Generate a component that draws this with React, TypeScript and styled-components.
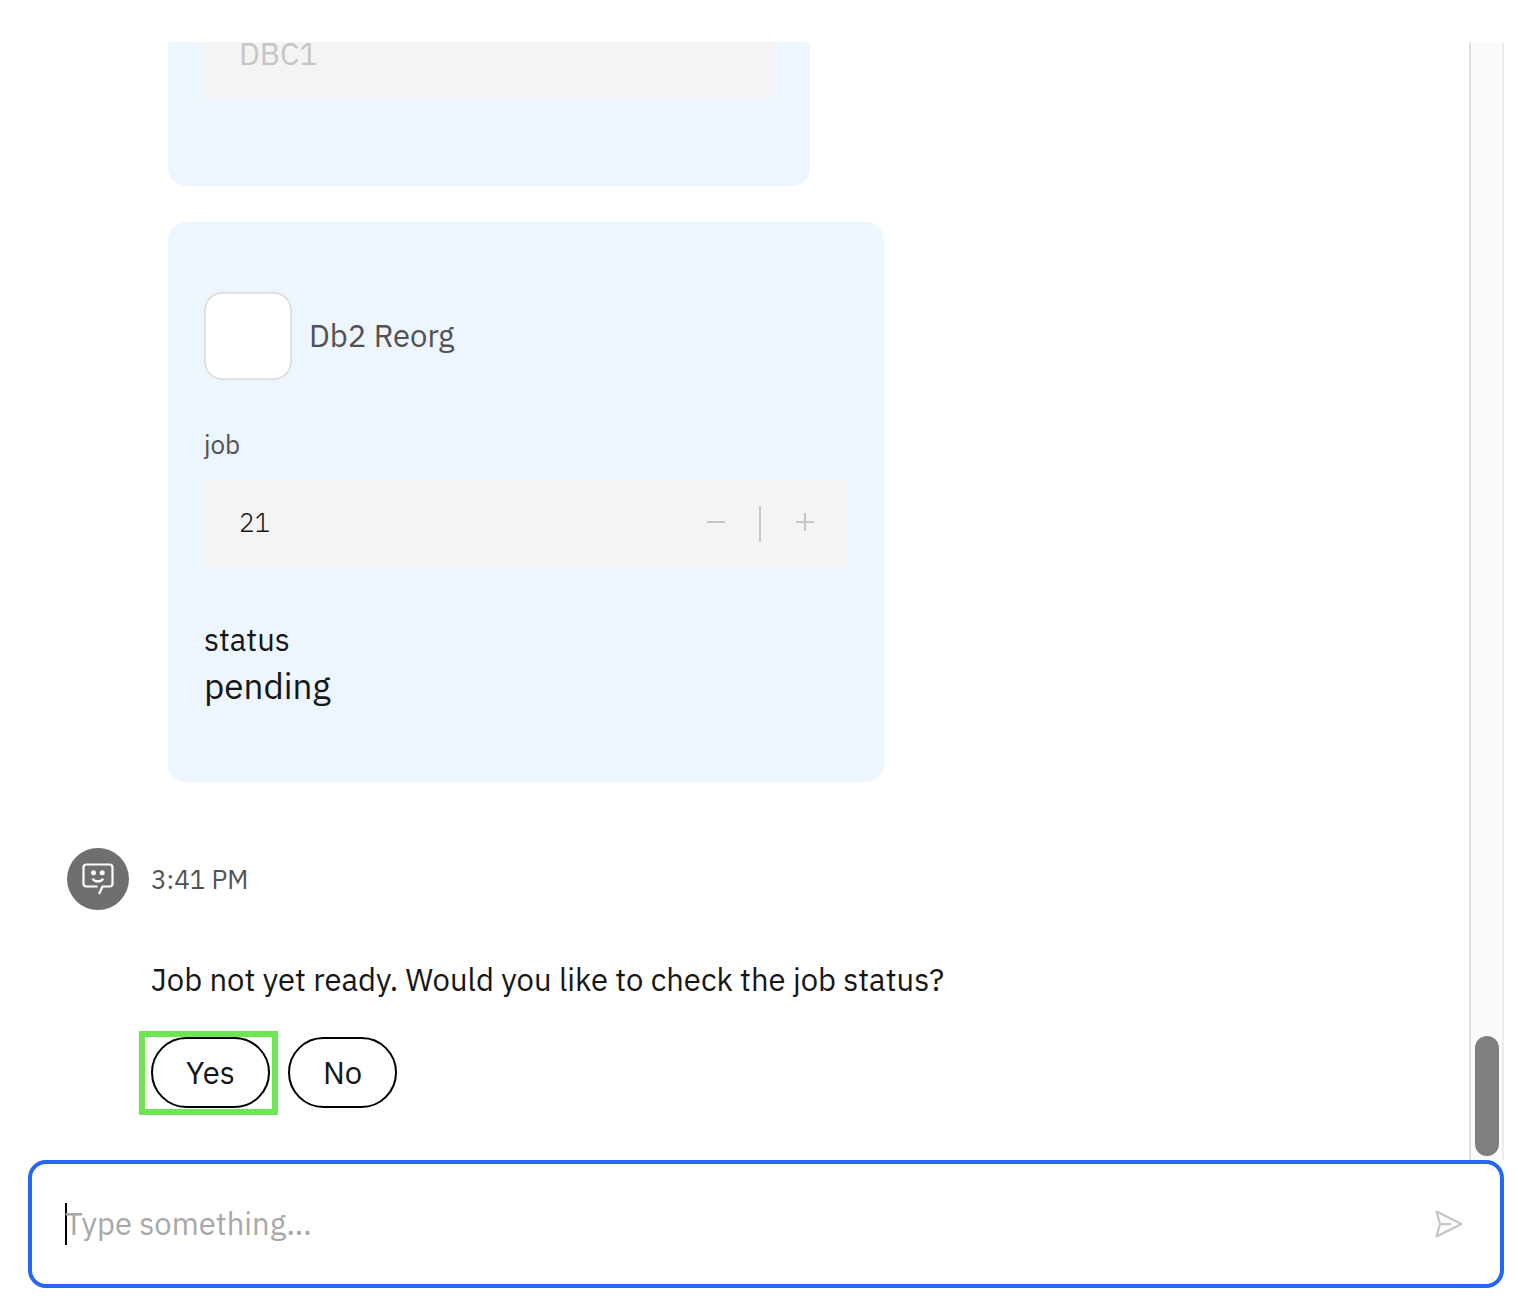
import React from "react";
import styled, { createGlobalStyle } from "styled-components";

const GlobalStyle = createGlobalStyle`
  * { box-sizing: border-box; }
  body {
    margin: 0;
    background: #ffffff;
    color: #161616;
    font-family: "IBM Plex Sans", "Open Sans", "Noto Sans", sans-serif;
    font-size: 31px;
    line-height: 40px;
  }
  button, input { font: inherit; color: inherit; }
`;

const Chat = styled.main`
  display: flex;
  flex-direction: column;
  height: 100vh;
  padding: 42px 14px 14px 28px;
`;

const Viewport = styled.div`
  display: flex;
  flex: 1;
  min-height: 0;
`;

const Messages = styled.section`
  display: flex;
  flex: 1;
  flex-direction: column;
  justify-content: flex-end;
  min-width: 0;
  overflow: hidden;
  padding: 0 39px 52px;
`;

const Cards = styled.div`
  display: flex;
  flex-direction: column;
  align-items: flex-start;
  gap: 36px;
  padding-left: 101px;
`;

const Card = styled.article<{ $width: number; $bottom: number }>`
  width: ${(p) => p.$width}px;
  max-width: 100%;
  padding: 70px 36px ${(p) => p.$bottom}px;
  border-radius: 18px;
  background: #edf5ff;
`;

const CardHeader = styled.header`
  display: flex;
  align-items: center;
  gap: 17px;
  margin-bottom: 47px;
  color: #525252;
`;

const Thumb = styled.span`
  width: 88px;
  height: 88px;
  border: 2px solid #e0e0e0;
  border-radius: 18px;
  background: #ffffff;
`;

const Title = styled.h2`
  margin: 0;
  font-size: 31px;
  font-weight: 400;
`;

const Field = styled.div`
  display: flex;
  align-items: center;
  height: 88px;
  background: #f4f4f4;
`;

const Label = styled.label`
  display: block;
  margin-bottom: 19px;
  color: #525252;
  font-size: 26px;
  line-height: 34px;
`;

const FieldInput = styled.input<{ $small?: boolean }>`
  flex: 1;
  min-width: 0;
  height: 100%;
  padding: 0 35px 4px;
  border: 0;
  outline: 0;
  background: transparent;
  appearance: textfield;
  font-size: ${(p) => (p.$small ? 26 : 31)}px;
  font-weight: ${(p) => (p.$small ? 300 : 400)};

  &:disabled { color: #c6c6c6; }
  &::-webkit-inner-spin-button { appearance: none; margin: 0; }
`;

const StepButton = styled.button`
  display: grid;
  place-items: center;
  width: 87px;
  height: 88px;
  padding: 0 0 4px;
  border: 0;
  background: transparent;
  color: #c6c6c6;
`;

const Divider = styled.span`
  width: 2px;
  height: 36px;
  background: #c6c6c6;
`;

const Status = styled.dl`
  margin: 52px 0 0;

  dt { line-height: 40px; }
  dd { margin: 0; font-size: 35px; line-height: 52px; }
`;

const Byline = styled.div`
  display: flex;
  align-items: center;
  gap: 22px;
  margin-top: 66px;
  color: #525252;
  font-size: 26px;
`;

const Reply = styled.div`
  padding-left: 84px;
`;

const ReplyText = styled.p`
  margin: 50px 0 37px;
`;

const Options = styled.div`
  display: flex;
  gap: 18px;
`;

const Marked = styled.span`
  position: relative;
  display: flex;

  &::after {
    content: "";
    position: absolute;
    inset: -6px -8px -7px -12px;
    border: 6px solid #6ce753;
    pointer-events: none;
  }
`;

const Option = styled.button`
  height: 71px;
  padding: 0 33px;
  border: 2px solid #000000;
  border-radius: 36px;
  background: transparent;
  color: #161616;
`;

const Track = styled.div`
  display: flex;
  flex-direction: column;
  justify-content: flex-end;
  width: 35px;
  padding: 4px;
  border-left: 2px solid #dedede;
  border-right: 2px solid #ebebeb;
  background: #fafafa;
`;

const TrackThumb = styled.div`
  width: 24px;
  height: 120px;
  border-radius: 12px;
  background: #7f7f7f;
`;

const Composer = styled.form`
  display: flex;
  align-items: center;
  height: 128px;
  padding: 0 33px;
  border: 4px solid #2467f5;
  border-radius: 18px;
`;

const Caret = styled.span`
  width: 2px;
  height: 42px;
  margin-right: -2px;
  background: #000000;
`;

const ComposerInput = styled.input`
  flex: 1;
  min-width: 0;
  padding: 0;
  border: 0;
  outline: 0;
  background: transparent;

  &::placeholder { color: #a8a8a8; opacity: 1; }
`;

const SendButton = styled.button`
  display: flex;
  padding: 0;
  border: 0;
  background: transparent;
  color: #c6c6c6;
`;

function BotAvatar() {
  return (
    <svg width="62" height="62" viewBox="0 0 62 62" fill="none" aria-hidden="true">
      <circle cx="31" cy="31" r="31" fill="#6f6f6f" />
      <path
        d="M30.5 38.5H19.5a3 3 0 0 1-3-3v-16a3 3 0 0 1 3-3h23a3 3 0 0 1 3 3v16a3 3 0 0 1-3 3h-7l-3.500 7.500"
        stroke="#fff"
        strokeWidth="2.2"
      />
      <circle cx="26.500" cy="24.700" r="2.500" fill="#fff" />
      <circle cx="35.200" cy="24.700" r="2.500" fill="#fff" />
      <path d="M25.500 30.600c2.500 3.800 8.200 3.800 10.700 0" stroke="#fff" strokeWidth="2.200" />
    </svg>
  );
}

function SendIcon() {
  return (
    <svg width="36" height="36" viewBox="0 0 32 32" fill="currentColor" aria-hidden="true">
      <path d="M27.45,15.11l-22-11a1,1,0,0,0-1.08.12,1,1,0,0,0-.33,1L7,16,4,26.74A1,1,0,0,0,5,28a1,1,0,0,0,.45-.11l22-11a1,1,0,0,0,0-1.78Zm-20.9,10L8.76,17H18V15H8.76L6.55,6.89,24.76,16Z" />
    </svg>
  );
}

function StepIcon({ plus }: { plus?: boolean }) {
  return (
    <svg width="18" height="18" viewBox="0 0 18 18" stroke="currentColor" strokeWidth="2" aria-hidden="true">
      <path d={plus ? "M0 9h18M9 0v18" : "M0 9h18"} />
    </svg>
  );
}

export default function App() {
  return (
    <>
      <GlobalStyle />
      <Chat>
        <Viewport>
          <Messages>
            <Cards>
              <Card $width={642} $bottom={87}>
                <Field>
                  <FieldInput aria-label="Database" defaultValue="DBC1" disabled />
                </Field>
              </Card>
              <Card $width={716} $bottom={70}>
                <CardHeader>
                  <Thumb />
                  <Title>Db2 Reorg</Title>
                </CardHeader>
                <Label htmlFor="job">job</Label>
                <Field>
                  <FieldInput id="job" type="number" defaultValue={21} readOnly $small />
                  <StepButton type="button" aria-label="Decrease">
                    <StepIcon />
                  </StepButton>
                  <Divider />
                  <StepButton type="button" aria-label="Increase">
                    <StepIcon plus />
                  </StepButton>
                </Field>
                <Status>
                  <dt>status</dt>
                  <dd>pending</dd>
                </Status>
              </Card>
            </Cards>
            <Byline>
              <BotAvatar />
              <time>3:41 PM</time>
            </Byline>
            <Reply>
              <ReplyText>Job not yet ready. Would you like to check the job status?</ReplyText>
              <Options>
                <Marked>
                  <Option type="button">Yes</Option>
                </Marked>
                <Option type="button">No</Option>
              </Options>
            </Reply>
          </Messages>
          <Track>
            <TrackThumb />
          </Track>
        </Viewport>
        <Composer onSubmit={(e) => e.preventDefault()}>
          <Caret />
          <ComposerInput aria-label="Message" placeholder="Type something..." />
          <SendButton type="submit" aria-label="Send">
            <SendIcon />
          </SendButton>
        </Composer>
      </Chat>
    </>
  );
}
